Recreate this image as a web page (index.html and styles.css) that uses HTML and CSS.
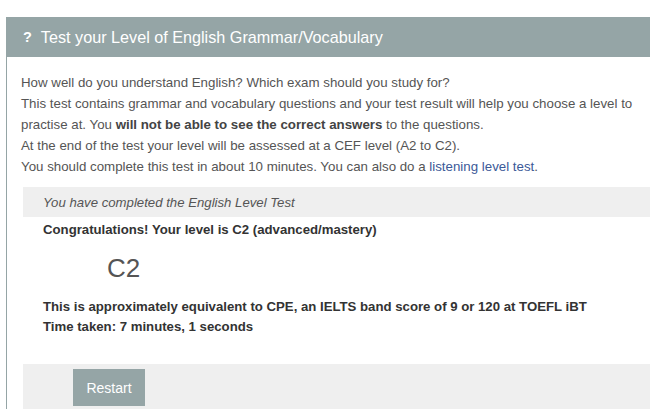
FILE: index.html
```html
<!DOCTYPE html>
<html>
<head>
<meta charset="utf-8">
<link rel="stylesheet" href="styles.css">
</head>
<body>
<div class="panel">
  <div class="panel-head"><span class="q">?</span>Test your Level of English Grammar/Vocabulary</div>
  <div class="panel-body">
    <p class="intro">How well do you understand English? Which exam should you study for?<br>
    This test contains grammar and vocabulary questions and your test result will help you choose a level to<br>practise at. You <b>will not be able to see the correct answers</b> to the questions.<br>
    At the end of the test your level will be assessed at a CEF level (A2 to C2).<br>
    You should complete this test in about 10 minutes. You can also do a <a href="#">listening level test</a>.</p>
    <div class="result">
      <div class="done">You have completed the English Level Test</div>
      <div class="congrats">Congratulations! Your level is C2 (advanced/mastery)</div>
      <div class="level">C2</div>
      <div class="equiv">This is approximately equivalent to CPE, an IELTS band score of 9 or 120 at TOEFL iBT<br>Time taken: 7 minutes, 1 seconds</div>
      <div class="actions"><button class="restart">Restart</button></div>
    </div>
  </div>
</div>
</body>
</html>
```
FILE: styles.css
```css
html, body { margin: 0; padding: 0; background: #fff; }
body { font-family: "Liberation Sans", Arial, sans-serif; color: #555; overflow: hidden; }
.panel { margin: 17px 0 0 6px; border-left: 1px solid #95a5a6; }
.panel-head { background: #95a5a6; color: #fff; height: 40px; display: flex; align-items: center; padding-left: 16px; font-size: 16.2px; }
.q { font-weight: bold; font-size: 14.5px; margin-right: 9px; }
.panel-body { padding: 15px 0 0 14px; }
.intro { margin: 0; font-size: 13.3px; line-height: 21px; color: #555; white-space: nowrap; }
.intro b { color: #444; }
.intro a { color: #3b5998; text-decoration: none; }
.result { margin: 10px 0 0 2px; }
.done { background: #efefef; height: 30px; display: flex; align-items: center; padding-left: 20px; font-style: italic; font-size: 13.2px; color: #555; }
.congrats { padding-left: 20px; font-weight: bold; font-size: 13.2px; color: #333; margin-top: 4px; line-height: 18px; }
.level { padding-left: 84px; font-size: 26px; color: #555; margin-top: 14px; line-height: 30px; }
.equiv { padding-left: 20px; font-weight: bold; font-size: 13.2px; color: #333; margin-top: 14px; line-height: 20px; }
.actions { background: #efefef; margin-top: 27px; padding: 5px 0 10px 50px; }
.restart { background: #95a5a6; color: #fff; border: 0; font-family: "Liberation Sans", Arial, sans-serif; font-size: 14px; width: 72px; height: 37px; padding: 0; }
```
